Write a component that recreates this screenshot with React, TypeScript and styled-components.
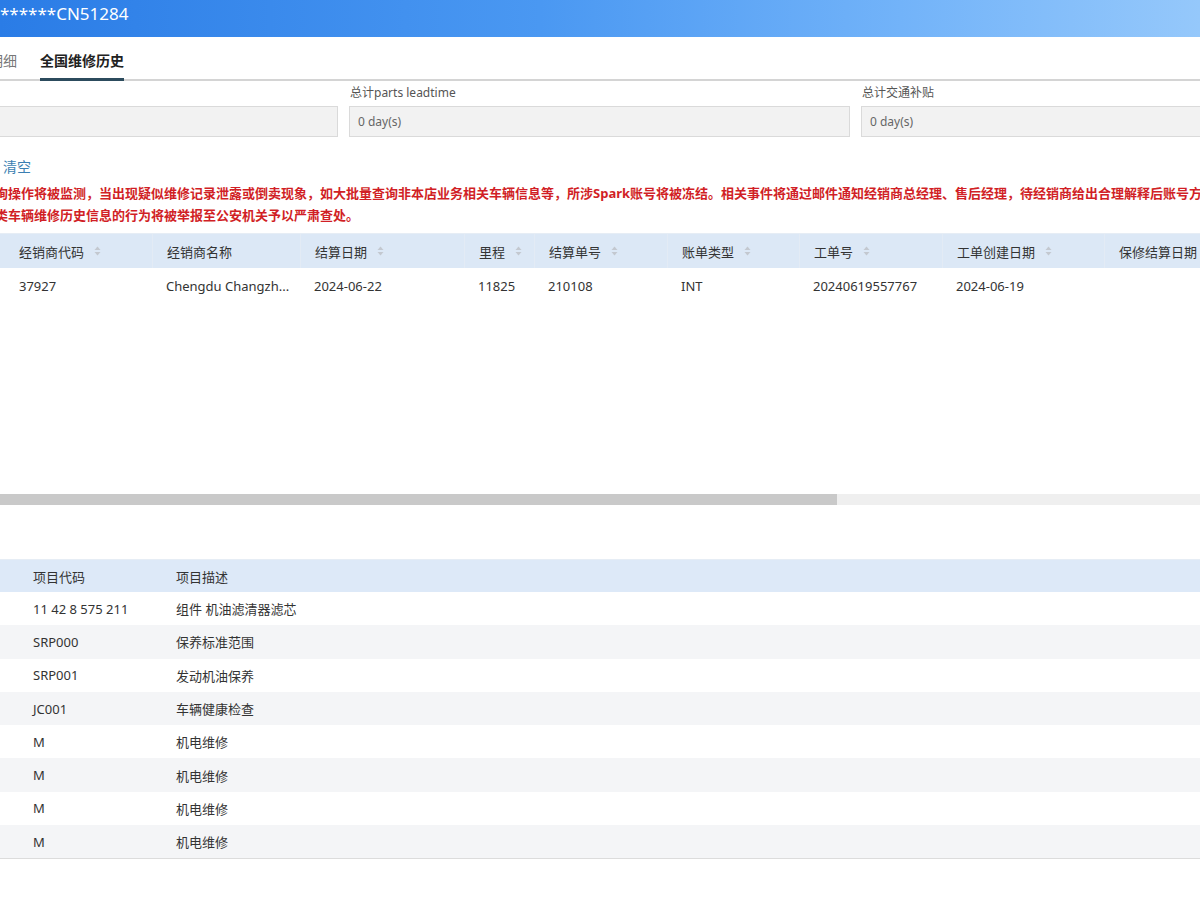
import React from 'react';
import styled, { createGlobalStyle } from 'styled-components';

const GlobalStyle = createGlobalStyle`
    html, body {
        margin: 0;
        padding: 0;
        background: #ffffff;
    }
    body {
        font-family: "Noto Sans", "Noto Sans CJK SC", sans-serif;
        color: #333;
    }
`;

type Column = { key: string; title: string; width: number; sortable?: boolean };

const historyColumns: Column[] = [
    { key: 'dealerCode', title: '经销商代码', width: 152, sortable: true },
    { key: 'dealerName', title: '经销商名称', width: 148 },
    { key: 'settleDate', title: '结算日期', width: 164, sortable: true },
    { key: 'mileage', title: '里程', width: 70, sortable: true },
    { key: 'settleNo', title: '结算单号', width: 133, sortable: true },
    { key: 'billType', title: '账单类型', width: 132, sortable: true },
    { key: 'orderNo', title: '工单号', width: 143, sortable: true },
    { key: 'orderDate', title: '工单创建日期', width: 162, sortable: true },
    { key: 'warrantyDate', title: '保修结算日期', width: 160, sortable: true },
];

const historyRows = [
    {
        dealerCode: '37927',
        dealerName: 'Chengdu Changzh...',
        settleDate: '2024-06-22',
        mileage: '11825',
        settleNo: '210108',
        billType: 'INT',
        orderNo: '20240619557767',
        orderDate: '2024-06-19',
        warrantyDate: '',
    },
];

const itemRows = [
    { code: '11 42 8 575 211', desc: '组件 机油滤清器滤芯' },
    { code: 'SRP000', desc: '保养标准范围' },
    { code: 'SRP001', desc: '发动机油保养' },
    { code: 'JC001', desc: '车辆健康检查' },
    { code: 'M', desc: '机电维修' },
    { code: 'M', desc: '机电维修' },
    { code: 'M', desc: '机电维修' },
    { code: 'M', desc: '机电维修' },
];

const gridTemplate = historyColumns.map((c) => `${c.width}px`).join(' ');

const SortIcon = () => (
    <svg width="7" height="10" viewBox="0 0 7 10">
        <path d="M3.5 0.5 L6.5 4 H0.5 Z" fill="#c3c8d0" />
        <path d="M3.5 9.5 L6.5 6 H0.5 Z" fill="#c3c8d0" />
    </svg>
);

export default function App() {
    return (
        <>
            <GlobalStyle />
            <Page>
                <TopBar>
                    <VinText>******CN51284</VinText>
                </TopBar>

                <Tabs>
                    <Tab>维修明细</Tab>
                    <Tab active>全国维修历史</Tab>
                </Tabs>

                <FieldGrid>
                    <Field>
                        <FieldLabel>总计工时</FieldLabel>
                        <FieldInput />
                    </Field>
                    <Field>
                        <FieldLabel>总计parts leadtime</FieldLabel>
                        <FieldInput>0 day(s)</FieldInput>
                    </Field>
                    <Field>
                        <FieldLabel>总计交通补贴</FieldLabel>
                        <FieldInput>0 day(s)</FieldInput>
                    </Field>
                </FieldGrid>

                <Actions>
                    <LinkButton>清空</LinkButton>
                </Actions>

                <Warning>
                    <WarningLine>
                        查询操作将被监测，当出现疑似维修记录泄露或倒卖现象，如大批量查询非本店业务相关车辆信息等，所涉Spark账号将被冻结。相关事件将通过邮件通知经销商总经理、售后经理，待经销商给出合理解释后账号方可解冻。
                    </WarningLine>
                    <WarningLine>此类车辆维修历史信息的行为将被举报至公安机关予以严肃查处。</WarningLine>
                </Warning>

                <HistoryTable>
                    <HistoryHead>
                        {historyColumns.map((col, i) => (
                            <HeadCell key={col.key} first={i === 0}>
                                {col.title}
                                {col.sortable && <SortIcon />}
                            </HeadCell>
                        ))}
                    </HistoryHead>
                    {historyRows.map((row, r) => (
                        <HistoryRow key={r}>
                            {historyColumns.map((col, i) => (
                                <BodyCell key={col.key} first={i === 0}>
                                    {row[col.key as keyof typeof row]}
                                </BodyCell>
                            ))}
                        </HistoryRow>
                    ))}
                </HistoryTable>
                <ScrollTrack>
                    <ScrollThumb />
                </ScrollTrack>

                <ItemTable>
                    <ItemHead>
                        <ItemCell>项目代码</ItemCell>
                        <ItemCell>项目描述</ItemCell>
                    </ItemHead>
                    {itemRows.map((row, i) => (
                        <ItemRow key={i} striped={i % 2 === 1}>
                            <ItemCell>{row.code}</ItemCell>
                            <ItemCell>{row.desc}</ItemCell>
                        </ItemRow>
                    ))}
                </ItemTable>
            </Page>
        </>
    );
}

const Page = styled.div`
    width: 1200px;
    height: 900px;
    overflow: hidden;
    display: flex;
    flex-direction: column;
    background: #fff;
`;

const TopBar = styled.div`
    height: 37px;
    flex-shrink: 0;
    display: flex;
    align-items: flex-start;
    background: linear-gradient(90deg, #2a7ce6 0%, #4a98f2 45%, #72b3f9 75%, #95c8fb 100%);
`;

const VinText = styled.span`
    margin-top: 3px;
    color: #fff;
    font-size: 17px;
    line-height: 22px;
`;

const Tabs = styled.div`
    height: 42px;
    flex-shrink: 0;
    display: flex;
    gap: 23px;
    margin-left: -39px;
    border-bottom: 2px solid #d4d4d4;
`;

const Tab = styled.div<{ active?: boolean }>`
    display: flex;
    align-items: center;
    padding-top: 4px;
    font-size: 14px;
    font-weight: ${(p) => (p.active ? 700 : 400)};
    color: ${(p) => (p.active ? '#222' : '#777')};
    border-bottom: 3px solid ${(p) => (p.active ? '#2c4b5d' : 'transparent')};
    margin-bottom: -2px;
`;

const FieldGrid = styled.div`
    display: grid;
    grid-template-columns: 501px 501px 501px;
    column-gap: 11px;
    margin-left: -163px;
    padding-top: 3px;
`;

const Field = styled.div`
    display: flex;
    flex-direction: column;
    gap: 4px;
`;

const FieldLabel = styled.div`
    font-size: 12px;
    line-height: 18px;
    color: #555;
    padding-left: 1px;
`;

const FieldInput = styled.div`
    height: 31px;
    box-sizing: border-box;
    border: 1px solid #dadada;
    background: #f2f2f2;
    font-size: 12px;
    color: #666;
    display: flex;
    align-items: center;
    padding-left: 8px;
`;

const Actions = styled.div`
    display: flex;
    align-items: center;
    height: 22px;
    margin-top: 18px;
`;

const LinkButton = styled.span`
    padding-left: 3px;
    font-size: 14px;
    color: #3b7fb2;
`;

const Warning = styled.div`
    margin-left: -18px;
    margin-top: 5px;
    display: flex;
    flex-direction: column;
`;

const WarningLine = styled.div`
    white-space: nowrap;
    font-size: 13px;
    line-height: 22px;
    font-weight: 700;
    color: #d11f26;
`;

const HistoryTable = styled.div`
    margin-top: 7px;
    height: 261px;
    flex-shrink: 0;
    display: flex;
    flex-direction: column;
`;

const HistoryHead = styled.div`
    display: grid;
    grid-template-columns: ${gridTemplate};
    height: 34px;
    background: #dce8f6;
    border-top: 1px solid #e6edf5;
`;

const HeadCell = styled.div<{ first?: boolean }>`
    display: flex;
    align-items: center;
    gap: 10px;
    padding-left: ${(p) => (p.first ? 19 : 14)}px;
    font-size: 13px;
    color: #333;
    white-space: nowrap;
    border-left: ${(p) => (p.first ? 'none' : '1px solid #e3ebf5')};
    box-sizing: border-box;
`;

const HistoryRow = styled.div`
    display: grid;
    grid-template-columns: ${gridTemplate};
    height: 36px;
`;

const BodyCell = styled.div<{ first?: boolean }>`
    display: flex;
    align-items: center;
    padding-left: ${(p) => (p.first ? 19 : 14)}px;
    font-size: 13px;
    color: #333;
    white-space: nowrap;
`;

const ScrollTrack = styled.div`
    height: 11px;
    flex-shrink: 0;
    background: #efefef;
    display: flex;
`;

const ScrollThumb = styled.div`
    width: 837px;
    background: #c9c9c9;
`;

const ItemTable = styled.div`
    margin-top: 54px;
    display: flex;
    flex-direction: column;
    border-top: 1px solid #e6edf5;
    border-bottom: 1px solid #dcdcdc;
`;

const ItemHead = styled.div`
    display: grid;
    grid-template-columns: 162px 1fr;
    height: 32px;
    background: #dde9f8;
`;

const ItemRow = styled.div<{ striped?: boolean }>`
    display: grid;
    grid-template-columns: 162px 1fr;
    height: 33.3px;
    background: ${(p) => (p.striped ? '#f4f5f7' : '#fff')};
`;

const ItemCell = styled.div`
    display: flex;
    align-items: center;
    padding-left: 14px;
    font-size: 13px;
    color: #333;
    white-space: nowrap;

    &:first-child {
        padding-left: 33px;
    }
`;
